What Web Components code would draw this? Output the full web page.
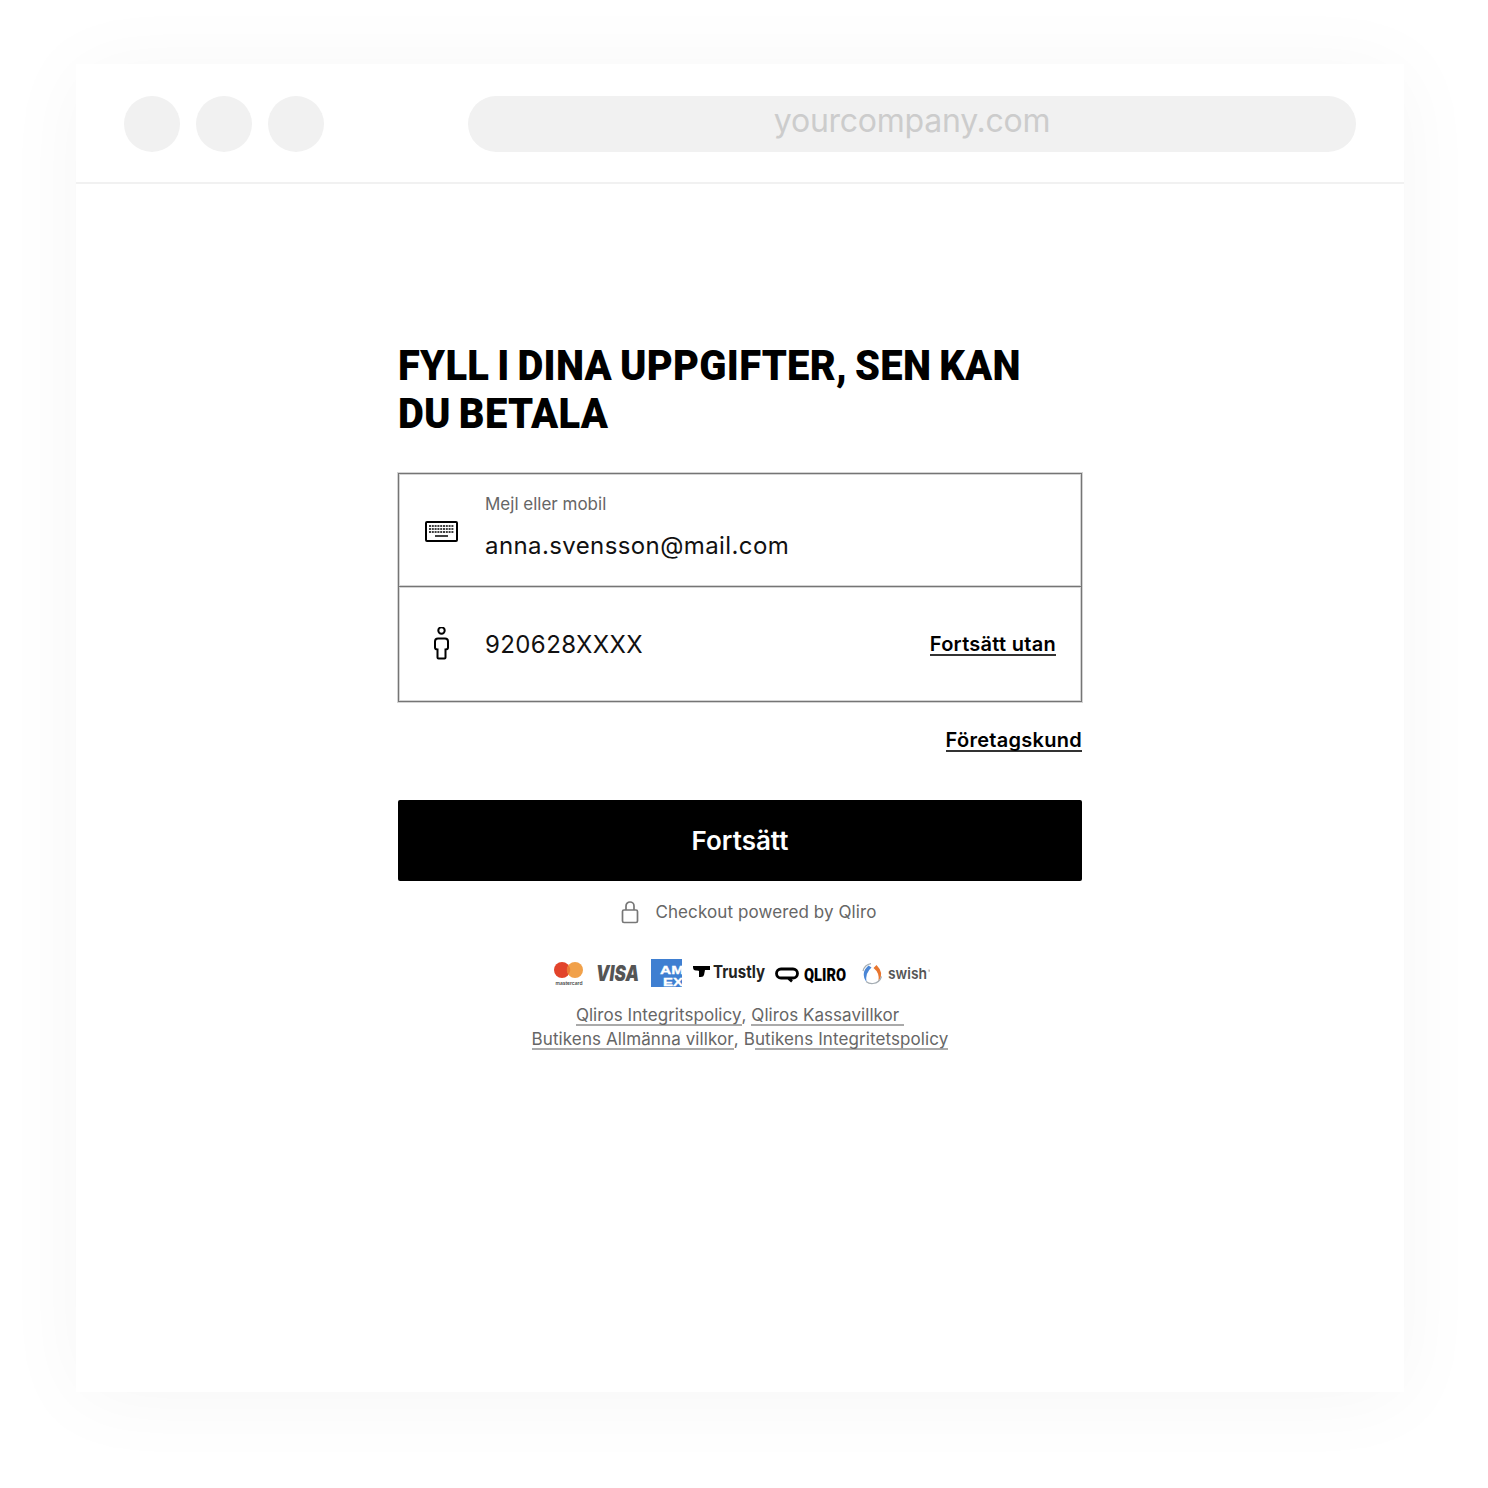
<!DOCTYPE html>
<html lang="sv"><head><meta charset="utf-8"><title>Checkout</title>
<style>
html,body{margin:0;background:#fff}
body{font-family:Inter,"Liberation Sans",sans-serif;width:1488px;height:1488px;overflow:hidden}
</style></head><body>
<browser-frame url="yourcompany.com">
  <checkout-form></checkout-form>
</browser-frame>
<script>
function def(name, html){
  customElements.define(name, class extends HTMLElement{
    connectedCallback(){
      if(this.shadowRoot) return;
      const r=this.attachShadow({mode:'open'});
      r.innerHTML=typeof html==='function'?html(this):html;
    }
  });
}
def('browser-frame', h=>`<style>
:host{display:block;padding:64px 84px 0 76px}
.win{width:1328px;height:1328px;background:#fff;box-shadow:0 6px 80px rgba(0,0,0,.04);display:flex;flex-direction:column}
.bar{border-bottom:2px solid #f1f1f1;display:flex;align-items:flex-start;padding:32px 48px 0;box-sizing:border-box;height:120px}
.dots{display:flex;gap:16px;width:344px}
.dots i{width:56px;height:56px;border-radius:50%;background:#f1f1f1}
.url{flex:1;height:56px;border-radius:28px;background:#f1f1f1;color:#ccc;font-size:32px;line-height:50px;text-align:center;letter-spacing:-.25px}
.page{flex:1;display:flex;justify-content:center}
</style><div class="win"><div class="bar"><div class="dots"><i></i><i></i><i></i></div><div class="url">${h.getAttribute('url')}</div></div><div class="page"><slot></slot></div></div>`);

def('field-row', h=>`<style>
:host{display:flex;align-items:center;box-sizing:border-box;padding:0 25px 0 26px;color:#000}
:host([first]){height:113px;border-bottom:1px solid #757575;box-shadow:0 1px 0 #d4d4d4,inset 0 -1px 0 #d4d4d4}
:host(:not([first])){height:114px}
:host([first]) .main{margin-bottom:5px}
:host(:not([first])) .main{margin-top:1px}
.ic{width:34px;height:34px;flex:none;margin-right:26px;display:flex}
.main{flex:1;display:flex;flex-direction:column}
.lab{font-size:17px;line-height:22px;color:#666;margin-bottom:16px;margin-top:-1px}
.val{font-size:24px;line-height:30px;letter-spacing:.4px;color:#111}
</style><div class="ic"><slot name="icon"></slot></div><div class="main">${h.getAttribute('label')?`<div class="lab">${h.getAttribute('label')}</div>`:''}<div class="val">${h.getAttribute('value')}</div></div><slot></slot>`);

def('text-link', `<style>
:host{display:inline-block;font-size:20px;font-weight:600;line-height:20px;padding-top:2px;color:#000;border-bottom:2px solid #333;letter-spacing:.28px}
</style><slot></slot>`);

def('pay-logos', `<style>
:host{display:flex;justify-content:center;height:32px}
svg{display:block}
text{font-family:Inter,"Liberation Sans",sans-serif}
</style>
<svg width="380" height="32" viewBox="0 0 380 32">
  <defs><clipPath id="amx"><rect x="101" y="1" width="31" height="28"/></clipPath></defs>
  <circle cx="12" cy="12" r="8" fill="#e2432b"/><circle cx="25" cy="12" r="8" fill="#f1a14a"/>
  <path d="M18.500 7.300a8 8 0 0 1 0 9.400a8 8 0 0 1 0-9.400z" fill="#ec7a35"/>
  <text x="19" y="27" font-size="4.600" font-weight="600" text-anchor="middle" fill="#444" textLength="27" lengthAdjust="spacingAndGlyphs">mastercard</text>
  <text x="46" y="23" font-size="22" font-weight="900" font-style="italic" fill="#555" textLength="43" lengthAdjust="spacingAndGlyphs">VISA</text>
  <rect x="101" y="1" width="31" height="28" fill="#3f7fd1"/>
  <g clip-path="url(#amx)">
  <text x="110" y="16" style="font-family:'Liberation Sans',sans-serif" font-size="10.500" font-weight="700" fill="#fff" stroke="#fff" stroke-width=".3" textLength="24" lengthAdjust="spacingAndGlyphs">AM</text>
  <text x="113" y="27.800" style="font-family:'Liberation Sans',sans-serif" font-size="10.500" font-weight="700" fill="#fff" stroke="#fff" stroke-width=".3" textLength="20" lengthAdjust="spacingAndGlyphs">EX</text>
  </g>
  <path d="M143 8H160V12H155L154 17Q153.500 19 151 19H149V13Q149 12.500 147 12.500H146Q143 12.500 143 9Z" fill="#000"/>
  <text x="163" y="20" font-size="17" font-weight="700" fill="#222" textLength="52" lengthAdjust="spacingAndGlyphs">Trustly</text>
  <path d="M238 20H231a4.500 4.500 0 0 1 0-9H243a4.500 4.500 0 0 1 0 9h-5l4 3.500" fill="none" stroke="#000" stroke-width="2.800" stroke-linejoin="round"/>
  <text x="254" y="22.500" style="font-family:Roboto,sans-serif" font-size="18" font-weight="900" fill="#000" textLength="42" lengthAdjust="spacingAndGlyphs">QLIRO</text>
  <path d="M318.500 7.500Q310 15 316.500 24Q315 15 321.500 9.500Z" fill="#4a86d6"/>
  <path d="M321 5.600A10 10 0 0 0 313 13" fill="none" stroke="#a5adb3" stroke-width="1.200"/>
  <path d="M326.500 7Q335 15.500 328.500 23.500Q330 15 323.500 10Z" fill="#e8762f"/>
  <path d="M323 25.500A10 10 0 0 0 331.500 18.500" fill="none" stroke="#a5adb3" stroke-width="1.200"/>
  <path d="M316 23.500A10 10 0 0 0 323 25.500" fill="none" stroke="#a5adb3" stroke-width="1.200"/>
  <text x="338" y="21" font-size="15" font-weight="600" fill="#555" textLength="39" lengthAdjust="spacingAndGlyphs">swish</text>
  <text x="378" y="15" font-size="5" fill="#888">®</text>
</svg>`);

def('checkout-form', `<style>
:host{display:block;width:684px;padding-top:158px}
h1{margin:0 0 35px;font:900 42px/48px Roboto,"Liberation Sans",sans-serif;color:#000;text-transform:uppercase;transform-origin:0 0;transform:scaleX(.95);width:700px;letter-spacing:.3px;word-spacing:-2.400px}
.box{border:1px solid #757575;box-shadow:0 0 0 1px #d4d4d4,inset 0 0 0 1px #d4d4d4;box-sizing:border-box;height:229px;display:flex;flex-direction:column}
.right{display:flex;justify-content:flex-end;margin-top:26px}
.btn{margin-top:48px;height:81px;border-radius:2px;background:#000;color:#fff;font-size:26px;font-weight:600;line-height:81px;text-align:center}
.pow{display:flex;justify-content:center;align-items:center;gap:16px;margin-top:19px;height:24px;font-size:17px;color:#666;letter-spacing:.1px;padding-left:18px}
pay-logos{margin-top:34px}
.legal{margin-top:13px;text-align:center;font-size:17px;line-height:24px;color:#666;letter-spacing:.05px}
.legal a{display:inline-block;line-height:18px;color:inherit;text-decoration:none;border-bottom:2px solid #aaa}
.l2{letter-spacing:.1px}
</style>
<h1>Fyll i dina uppgifter, sen kan du betala</h1>
<div class="box">
  <field-row first label="Mejl eller mobil" value="anna.svensson@mail.com">
    <svg slot="icon" width="34" height="34" viewBox="0 0 34 34" fill="none" stroke="#000"><rect x="1" y="9" width="31" height="19" rx="1" stroke-width="2"/><path d="M4 13h25M4 16h25M4 19h25" stroke-width="1.600" stroke-dasharray="2 .8"/><path d="M10 23h13" stroke-width="1.500"/></svg>
  </field-row>
  <field-row value="920628XXXX">
    <svg slot="icon" width="34" height="34" viewBox="0 0 34 34" fill="none" stroke="#000" stroke-width="2"><circle cx="16.500" cy="3.500" r="3.200"/><path d="M10 12.500q0-3 3-3h7q3 0 3 3v6q0 2-2.500 2v8q0 1-1 1h-6q-1 0-1-1v-8q-2.500 0-2.500-2z" transform="translate(0,2)"/></svg>
    <text-link>Fortsätt utan</text-link>
  </field-row>
</div>
<div class="right"><text-link>Företagskund</text-link></div>
<div class="btn">Fortsätt</div>
<div class="pow"><svg width="18" height="24" viewBox="0 0 18 24" fill="none" stroke="#777" stroke-width="1.700"><rect x="1.500" y="10" width="15" height="12.500" rx="1.500"/><path d="M5 10V6a4 4 0 0 1 8 0v4"/></svg><span>Checkout powered by Qliro</span></div>
<pay-logos></pay-logos>
<div class="legal"><a>Qliros Integritspolicy</a>, <a>Qliros Kassavillkor&nbsp;</a><br><span class="l2"><a>Butikens Allmänna villkor</a>, B<a>utikens Integritetspolicy</a></span></div>
`);
</script>
</body></html>
